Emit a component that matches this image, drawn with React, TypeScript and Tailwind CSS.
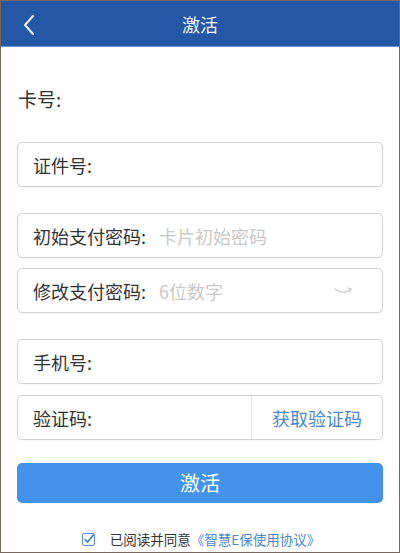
import React, { useState } from 'react';

const font = { fontFamily: '"Noto Sans CJK SC", "Noto Sans", sans-serif' };

function Field({ label, placeholder, right }: { label: string; placeholder?: string; right?: React.ReactNode }) {
  return (
    <div className="flex h-[45px] items-center rounded-[5px] border border-[#d2d2d2] bg-white shadow-[0_1px_1px_rgba(0,0,0,0.04)]">
      <span className="shrink-0 whitespace-nowrap pl-[15px] text-[18px] leading-[24px] text-[#333]">{label}</span>
      <span className="min-w-0 flex-1 whitespace-nowrap pl-[13px] text-[18px] leading-[24px] text-[#c9c9c9]">{placeholder}</span>
      {right}
    </div>
  );
}

function EyeClosed() {
  return (
    <svg width="22" height="12" viewBox="0 0 22 12" className="mr-[28px] shrink-0">
      <path d="M3 4 Q11 11 19 4" fill="none" stroke="#cfcfcf" strokeWidth="1.6" strokeLinecap="round" />
      <path d="M16 3 L19 4 L18 7" fill="none" stroke="#d2d2d2" strokeWidth="1.3" strokeLinecap="round" strokeLinejoin="round" />
    </svg>
  );
}

export default function App() {
  const [agree, setAgree] = useState(true);

  return (
    <div className="h-[553px] w-[400px] overflow-hidden border border-[#76685f] bg-white" style={font}>
      {/* header */}
      <div className="relative flex h-[46px] items-center justify-center border-b border-[#6c97d6] bg-[#2458a7]">
        <button className="absolute left-[18px] top-[11px] p-[2px]">
          <svg width="16" height="22" viewBox="0 0 16 22">
            <polyline points="12,2 4,11 12,20" fill="none" stroke="#e8efff" strokeWidth="2" strokeLinecap="round" strokeLinejoin="round" />
          </svg>
        </button>
        <h1 className="text-[18px] font-normal leading-none text-[#f2f6ff]">激活</h1>
      </div>

      <div className="px-[16px]">
        <div className="pt-[40px] pl-[1px] text-[19px] leading-[24px] text-[#333]">卡号:</div>

        <div className="mt-[31px]">
          <Field label="证件号:" />
        </div>

        <div className="mt-[26px] space-y-[10px]">
          <Field label="初始支付密码:" placeholder="卡片初始密码" />
          <Field label="修改支付密码:" placeholder="6位数字" right={<EyeClosed />} />
        </div>

        <div className="mt-[26px] space-y-[11px]">
          <Field label="手机号:" />
          <Field
            label="验证码:"
            right={
              <button className="flex h-full w-[131px] shrink-0 items-center justify-center border-l border-[#e6e6e6] text-[18px] leading-none text-[#4a89cf]">
                获取验证码
              </button>
            }
          />
        </div>

        <button className="mt-[23px] flex h-[40px] w-full items-center justify-center rounded-[5px] bg-[#4393eb] text-[20px] leading-none text-white">
          激活
        </button>

        <div className="mt-[30px] flex items-center justify-center pl-[2px] text-[13.5px] leading-none">
          <button
            onClick={() => setAgree(!agree)}
            className="mr-[15px] flex h-[13px] w-[13px] items-center justify-center rounded-[2px] border border-[#5a8fd8] bg-white"
          >
            {agree && (
              <svg width="13" height="13" viewBox="0 0 13 13">
                <polyline points="2.5,6.5 5.5,9.5 12,1.5" fill="none" stroke="#3e7fd6" strokeWidth="2" strokeLinecap="round" strokeLinejoin="round" />
              </svg>
            )}
          </button>
          <span className="text-[#333]">已阅读并同意</span>
          <span className="text-[#4a89cf]">《智慧E保使用协议》</span>
        </div>
      </div>
    </div>
  );
}
